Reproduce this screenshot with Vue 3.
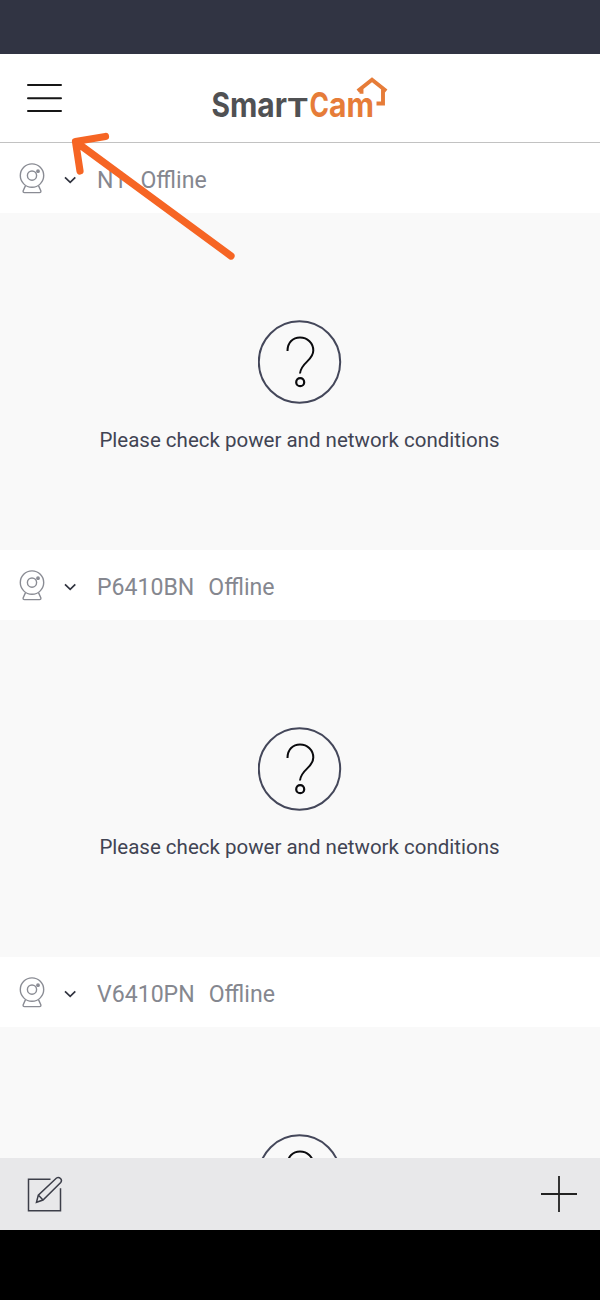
<template>
  <div class="screen">
    <div class="status-bar"></div>

    <header class="header">
      <button class="menu-btn" aria-label="Menu">
        <svg width="36" height="30" viewBox="0 0 36 30">
          <path d="M2 2H35M2 15.200H35M2 28H35" fill="none" stroke="#161616" stroke-width="2" stroke-linecap="round" />
        </svg>
      </button>
      <svg class="logo" width="180" height="56" viewBox="0 -4 180 56">
        <g class="logo-text">
          <text x="0.500" y="43.300" font-size="33.500" textLength="18.500" lengthAdjust="spacingAndGlyphs" fill="#505153">S</text>
          <text x="19" y="43.300" font-size="33.500" textLength="57" lengthAdjust="spacingAndGlyphs" fill="#505153">mar</text>
          <text x="76" y="43.300" font-size="26" textLength="21.500" lengthAdjust="spacingAndGlyphs" fill="#505153">T</text>
          <text x="98.500" y="43.300" font-size="33.500" textLength="19.500" lengthAdjust="spacingAndGlyphs" fill="#e67c38">C</text>
          <text x="118" y="43.300" font-size="33.500" textLength="45" lengthAdjust="spacingAndGlyphs" fill="#e67c38">am</text>
        </g>
        <path d="M146.800 17L161 5.800L175.200 17M150.500 14.500V19.700M172 14.500V29.500H165.500" fill="none" stroke="#e67c38" stroke-width="3.900" />
      </svg>
    </header>

    <!-- Camera list -->
    <main class="camera-list">
      <section v-for="camera in cameras" :key="camera.name" class="camera">
        <div class="camera-title">
          <svg class="camera-icon" width="28" height="32" viewBox="0 -0.6 28 32" fill="none" stroke="#8a8c94" stroke-width="1.4">
            <circle cx="14" cy="13" r="11.700" />
            <circle cx="14" cy="13" r="4.600" />
            <circle cx="20" cy="8.600" r="1.200" fill="#8a8c94" />
            <path d="M7.500 23L5.200 28.200Q4.700 30 6.500 30H21.500Q23.300 30 22.800 28.200L20.500 23" />
          </svg>
          <svg class="chevron" width="14" height="10" viewBox="0 0 14 10">
            <path d="M2 2.300L7.200 7.300L12.300 2.300" fill="none" stroke="#30333f" stroke-width="1.700" />
          </svg>
          <span class="camera-name">{{ camera.name }}</span>
          <span class="camera-status">{{ camera.status }}</span>
        </div>
        <div class="camera-view">
          <svg width="84" height="84" viewBox="0.5 0 84 84" fill="none">
            <circle cx="42" cy="42" r="40.700" stroke="#44475a" stroke-width="2" />
            <path d="M30 31C30 22.500 35.500 17.500 42.500 17.500C50 17.500 55.800 23 55.800 30.500C55.800 41 43.500 42 42.500 53.500" stroke="#0b0b0e" stroke-width="2" />
            <circle cx="42.700" cy="62.200" r="4" stroke="#0b0b0e" stroke-width="2.200" />
          </svg>
          <p class="message">Please check power and network conditions</p>
        </div>
      </section>
    </main>

    <footer class="toolbar">
      <button class="edit-btn" aria-label="Edit">
        <svg width="38" height="38" viewBox="-0.5 -0.3 38 38" fill="none" stroke="#3c3e49" stroke-width="1.500">
          <path d="M25 4H3V35.500H35V13" />
          <path d="M11 27L12.800 19.800L31 2.700Q33 1.300 35 3.200Q36.800 5.200 35.200 7.200L17.500 24.700ZM12.800 19.800L17.500 24.700" />
        </svg>
      </button>
      <button class="add-btn" aria-label="Add">
        <svg width="38" height="38" viewBox="0 0 38 38">
          <path d="M1 19H37M19 1V37" stroke="#222" stroke-width="1.800" />
        </svg>
      </button>
    </footer>
    <div class="nav-bar"></div>

    <!-- Arrow pointing at the menu button -->
    <svg class="pointer" width="180" height="140" viewBox="0 0 180 140">
      <path d="M171 126L16 12M45.500 6.500L15.500 11.500L20 41" fill="none" stroke="#f66524" stroke-width="7.200" stroke-linecap="round" stroke-linejoin="round" />
    </svg>
  </div>
</template>

<script setup>
import { ref } from 'vue'

const cameras = ref([
  { name: 'N1', status: 'Offline' },
  { name: 'P6410BN', status: 'Offline' },
  { name: 'V6410PN', status: 'Offline' }
])
</script>

<style>
body {
  margin: 0;
}
</style>

<style scoped>
.screen {
  position: relative;
  display: flex;
  flex-direction: column;
  width: 600px;
  height: 1300px;
  overflow: hidden;
  background: #fff;
  font-family: Roboto, "Liberation Sans", sans-serif;
}

button {
  display: flex;
  padding: 0;
  border: none;
  background: none;
}

.status-bar {
  flex: 0 0 54px;
  background: #313443;
}

.header {
  box-sizing: border-box;
  flex: 0 0 89px;
  display: flex;
  align-items: center;
  padding-left: 26px;
  border-bottom: 1px solid #c2c2c2;
}

.logo {
  margin-left: 149px;
  overflow: visible;
}

.logo-text {
  font-family: Inter, sans-serif;
  font-weight: 700;
}

/* Camera list */
.camera-list {
  flex: 1;
  min-height: 0;
  overflow: hidden;
}

.camera-title {
  display: flex;
  align-items: center;
  height: 70px;
  padding-left: 18px;
  background: #fff;
  color: #85878f;
  font-size: 23.1px;
  white-space: nowrap;
}

.chevron {
  margin: 4px 20px 0 17px;
}

.camera-name {
  margin-top: 4px;
}

.camera-status {
  margin: 4px 0 0 14px;
}

.camera-view {
  display: flex;
  flex-direction: column;
  align-items: center;
  box-sizing: border-box;
  height: 337px;
  padding-top: 107px;
  background: #f9f9f9;
}

.message {
  margin: 23px 0 0;
  padding-right: 1px;
  color: #414453;
  font-size: 20.5px;
  line-height: 26px;
  white-space: nowrap;
}

/* Bottom bar */
.toolbar {
  flex: 0 0 72px;
  display: flex;
  align-items: center;
  justify-content: space-between;
  box-sizing: border-box;
  padding: 0 22px 0 25px;
  background: #e8e8ea;
}

.nav-bar {
  flex: 0 0 70px;
  background: #000;
}

.pointer {
  position: absolute;
  top: 130px;
  left: 60px;
}
</style>
